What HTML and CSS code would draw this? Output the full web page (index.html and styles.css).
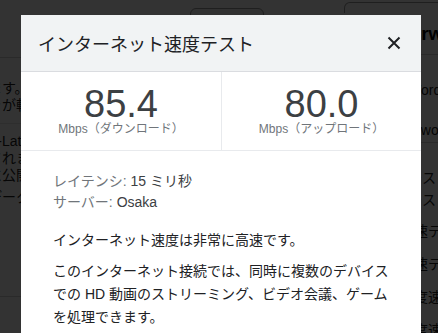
FILE: index.html
```html
<!DOCTYPE html>
<html lang="ja">
<head>
<meta charset="utf-8">
<title>インターネット速度テスト</title>
<link rel="stylesheet" href="styles.css">
</head>
<body>
<div class="page">
  <div class="topbar">
    <span class="tab tab-a"></span>
    <span class="tab tab-b"></span>
  </div>
  <div class="content">
    <div class="leftcol">
      <div class="rule"></div>
      <p class="bgline">ます。</p>
      <p class="bgline">きが転送されます</p>
      <div class="rule faint"></div>
      <p class="bgline">A-Latency</p>
      <p class="bgline">されます</p>
      <p class="bgline">に公開</p>
      <p class="bgline last">データ</p>
      <div class="rule bottom"></div>
    </div>
    <div class="rightcol">
      <p class="bghead">Forward</p>
      <div class="rule"></div>
      <p class="bgline r-words">Words</p>
      <p class="bgline r-net">Network</p>
      <div class="rule r-rule"></div>
      <p class="bgline r-jp first">テスト</p>
      <p class="bgline r-jp">テスト</p>
      <p class="bgline r-tall first">速テ</p>
      <p class="bgline r-tall">速テ</p>
      <p class="bgline r-tall">度速</p>
      <p class="bgline r-tall">度速</p>
    </div>
  </div>
</div>
<div class="overlay"></div>
<div class="dialog" role="dialog">
  <div class="dialog-header">
    <h1 class="dialog-title">インターネット速度テスト</h1>
    <button class="close" aria-label="閉じる">
      <svg width="14" height="14" viewBox="0 0 14 14"><path d="M1.5 1.5 L12.5 12.5 M12.5 1.5 L1.5 12.5" stroke="#202124" stroke-width="2" fill="none"/></svg>
    </button>
  </div>
  <div class="stats">
    <div class="stat">
      <div class="stat-value">85.4</div>
      <div class="stat-label">Mbps（ダウンロード）</div>
    </div>
    <div class="stat">
      <div class="stat-value">80.0</div>
      <div class="stat-label">Mbps（アップロード）</div>
    </div>
  </div>
  <div class="dialog-body">
    <div class="info">
      <div><span class="info-key">レイテンシ:</span> <span class="info-val">15 ミリ秒</span></div>
      <div><span class="info-key">サーバー:</span> <span class="info-val">Osaka</span></div>
    </div>
    <p class="para">インターネット速度は非常に高速です。</p>
    <p class="para">このインターネット接続では、同時に複数のデバイスでの HD 動画のストリーミング、ビデオ会議、ゲームを処理できます。</p>
  </div>
</div>
</body>
</html>
```

FILE: styles.css
```css
html, body {
  margin: 0;
  padding: 0;
  height: 100%;
  overflow: hidden;
}

body {
  font-family: "Liberation Sans", "Noto Sans CJK JP", sans-serif;
  background: #ffffff;
  color: #000;
}

/* ---------- background page ---------- */
.page {
  height: 100%;
  display: flex;
  flex-direction: column;
}

.topbar {
  height: 8px;
  background: #d2d2d2;
  position: relative;
}

.tab {
  position: absolute;
  height: 30px;
  border: 1px solid #9a9a9a;
  border-radius: 6px;
  background: transparent;
}
.tab-a { left: 190px; width: 72px; top: 8px; background: #f4f4f4; }
.tab-b { left: 344px; width: 120px; top: 2px; height: 10px; border-bottom: 0; border-radius: 6px 6px 0 0; }

.content {
  flex: 1;
  display: flex;
  justify-content: space-between;
}

.leftcol {
  margin-left: -12px;
  width: 140px;
  padding-top: 57px;
  font-size: 14px;
}

.rightcol {
  width: 40px;
  margin-right: -22px;
  padding-top: 21px;
  font-size: 14px;
  overflow: hidden;
  white-space: nowrap;
}

.rule {
  height: 1px;
  background: #cfcfcf;
  margin: 0 0 22px;
}
.rule.faint { background: #e6e6e6; margin: 9px 0 9px; }
.rule.bottom { margin-top: 90px; }

.bgline {
  margin: 0;
  line-height: 17px;
  white-space: nowrap;
  color: #222;
}
.bgline.last { margin-top: 5px; }

.bghead {
  margin: 0 0 7px -22px;
  font-size: 19px;
  font-weight: bold;
  line-height: 26px;
  color: #000;
}

.rightcol .rule { margin: 0; }
.rightcol .r-rule { margin-top: 2px; }

.r-words { margin: 25px 0 0 -12px; line-height: 20px; }
.r-net { margin: 20px 0 0 -21px; line-height: 20px; }
.r-jp { line-height: 22px; margin-left: -12px; }
.r-jp.first { margin-top: 24px; }
.r-tall { line-height: 33px; margin-left: -6px; }
.r-tall.first { margin-top: 4px; }

.overlay {
  position: fixed;
  inset: 0;
  background: rgba(0, 0, 0, 0.8);
}

/* ---------- dialog ---------- */
.dialog {
  position: fixed;
  left: 21px;
  top: 15px;
  width: 400px;
  bottom: -40px;
  background: #ffffff;
}

.dialog-header {
  height: 56px;
  background: #f1f3f4;
  border-bottom: 1px solid #dadce0;
  display: flex;
  align-items: center;
  justify-content: space-between;
  padding: 0 20px 0 17px;
}

.dialog-title {
  margin: 0;
  padding-top: 4px;
  font-size: 18px;
  font-weight: normal;
  line-height: 24px;
  color: #202124;
}

.close {
  border: 0;
  background: transparent;
  padding: 0;
  width: 14px;
  height: 14px;
  display: flex;
  cursor: pointer;
}

.stats {
  display: grid;
  grid-template-columns: 200px 200px;
  border-bottom: 1px solid #e8eaed;
}

.stat {
  height: 78px;
  box-sizing: border-box;
  padding-top: 14px;
  text-align: center;
}
.stat + .stat { border-left: 1px solid #e8eaed; }

.stat-value {
  font-size: 38px;
  line-height: 37px;
  color: #3c4043;
}

.stat-label {
  font-size: 12px;
  line-height: 12px;
  color: #70757a;
}

.dialog-body {
  padding: 20px 28px 20px 32px;
  font-size: 14px;
}

.info {
  line-height: 21px;
  margin-bottom: 16px;
}
.info-key { color: #70757a; }
.info-val { color: #3c4043; }

.para {
  margin: 0 0 8px;
  line-height: 23px;
  color: #202124;
}
```
